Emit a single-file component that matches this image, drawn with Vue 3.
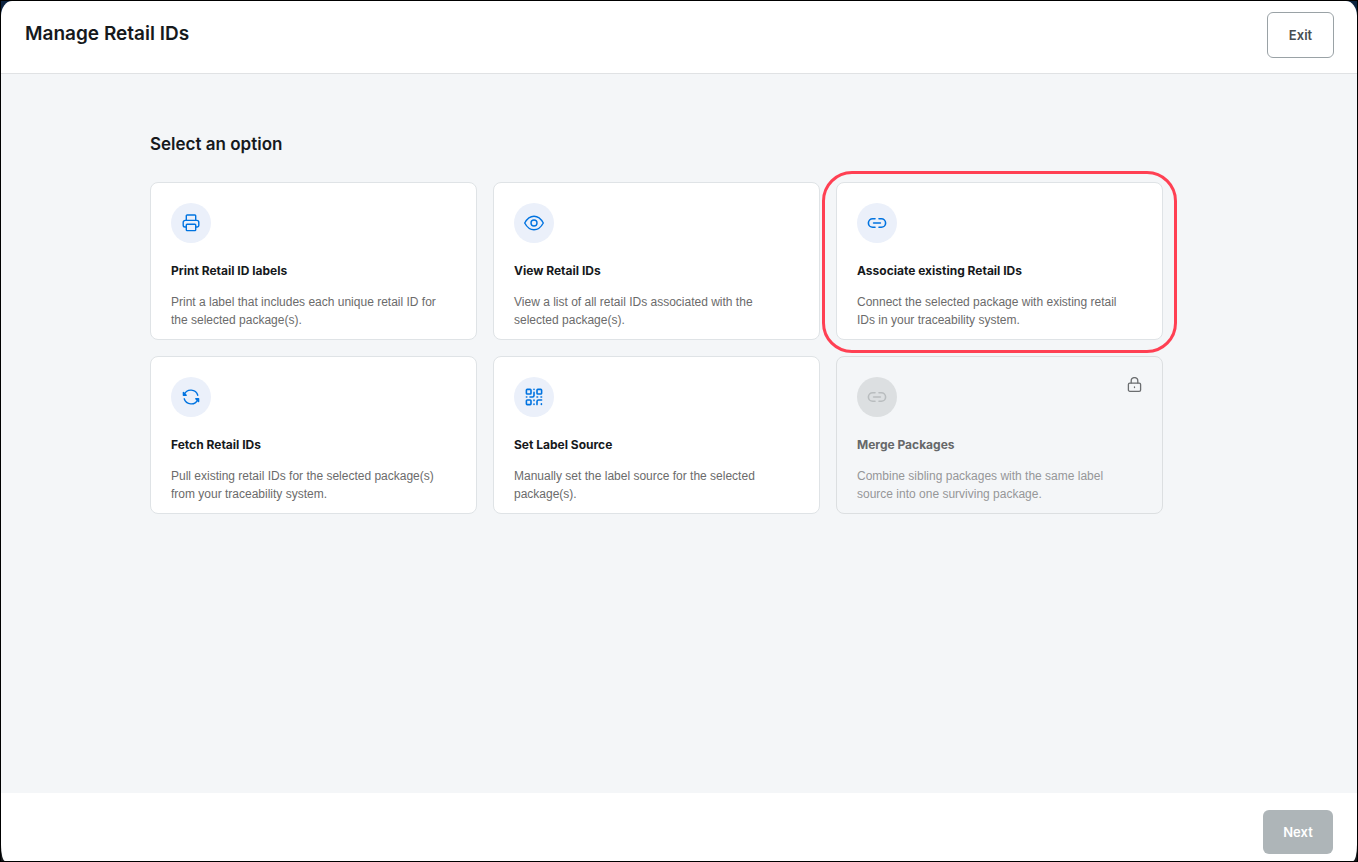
<script setup>
import { ref } from 'vue'

const selected = ref('associate')

const options = [
  {
    key: 'print',
    icon: 'printer',
    title: 'Print Retail ID labels',
    text: 'Print a label that includes each unique retail ID for the selected package(s).'
  },
  {
    key: 'view',
    icon: 'eye',
    title: 'View Retail IDs',
    text: 'View a list of all retail IDs associated with the selected package(s).'
  },
  {
    key: 'associate',
    icon: 'link',
    title: 'Associate existing Retail IDs',
    text: 'Connect the selected package with existing retail IDs in your traceability system.'
  },
  {
    key: 'fetch',
    icon: 'refresh',
    title: 'Fetch Retail IDs',
    text: 'Pull existing retail IDs for the selected package(s) from your traceability system.'
  },
  {
    key: 'source',
    icon: 'qr',
    title: 'Set Label Source',
    text: 'Manually set the label source for the selected package(s).'
  },
  {
    key: 'merge',
    icon: 'link',
    title: 'Merge Packages',
    text: 'Combine sibling packages with the same label source into one surviving package.',
    locked: true
  }
]
</script>

<template>
  <div class="page">
    <div class="modal">
      <header class="modal-header">
        <h1>Manage Retail IDs</h1>
        <button type="button" class="btn btn-exit">Exit</button>
      </header>

      <main class="modal-body">
        <div class="content">
          <h2>Select an option</h2>
          <div class="options">
            <button
              v-for="option in options"
              :key="option.key"
              type="button"
              class="option"
              :class="{ highlighted: option.key === selected }"
              :disabled="option.locked"
              @click="selected = option.key"
            >
              <span class="option-top">
                <span class="option-icon">
                  <svg v-if="option.icon === 'printer'" viewBox="0 0 20 20">
                    <path d="M5.3 7V2.8a.8.8 0 0 1 .8-.8h7.800a.8.8 0 0 1 .8.8V7" />
                    <path d="M5 14H4a1.800 1.800 0 0 1-1.800-1.800V9.400A2 2 0 0 1 4.200 7.400h11.600a2 2 0 0 1 2 2v2.800A1.800 1.800 0 0 1 16 14h-1" />
                    <rect x="5.300" y="11.200" width="9.400" height="6.400" rx=".8" />
                  </svg>
                  <svg v-else-if="option.icon === 'eye'" viewBox="0 0 20 20">
                    <path d="M.7 10C3 5.800 6.200 3.200 10 3.200S17 5.800 19.300 10C17 14.200 13.800 16.800 10 16.800S3 14.200.7 10z" />
                    <circle cx="10" cy="10" r="3" />
                  </svg>
                  <svg v-else-if="option.icon === 'link'" class="link" viewBox="0 0 20 20">
                    <path d="M8 5.700H5.700a4.300 4.300 0 0 0 0 8.600H8M12 5.700h2.300a4.300 4.300 0 0 1 0 8.600H12M6.600 10h6.800" />
                  </svg>
                  <svg v-else-if="option.icon === 'refresh'" viewBox="0 0 20 20">
                    <path d="M3.200 7.400A7.300 7.300 0 0 1 16.800 8.200M16.800 12.600A7.300 7.300 0 0 1 3.200 11.800" />
                    <path class="arrow" d="M2.400 5.400v2.800h2.800zM17.600 14.600v-2.800h-2.800z" />
                  </svg>
                  <svg v-else class="qr" viewBox="0 0 20 20">
                    <rect x="2.400" y="2.400" width="4.600" height="4.600" rx=".8" />
                    <rect x="13" y="2.400" width="4.600" height="4.600" rx=".8" />
                    <rect x="2.400" y="13" width="4.600" height="4.600" rx=".8" />
                    <path d="M10 2.200v.2M10 5.400v3a1.600 1.600 0 0 1-1.600 1.600H6M2.400 10h.4M13 10h.6M17 10h.6M10 13v.6M10 17v.4M13 17.600v-3A1.600 1.600 0 0 1 14.600 13h3M17.400 16.800v.6" />
                  </svg>
                </span>
                <svg v-if="option.locked" class="lock" viewBox="0 0 16 16">
                  <rect x="2.400" y="6.100" width="12.200" height="8.200" rx="1.400" />
                  <path d="M5.200 5.900V3.900a3.300 3.300 0 0 1 6.600 0v2M8.500 10v.6" />
                </svg>
              </span>
              <span class="option-title">{{ option.title }}</span>
              <span class="option-text">{{ option.text }}</span>
            </button>
          </div>
        </div>
      </main>

      <footer class="modal-footer">
        <button type="button" class="btn btn-next" disabled>Next</button>
      </footer>
    </div>
  </div>
</template>

<style>
body {
  margin: 0;
}
</style>

<style scoped>
.page {
  box-sizing: border-box;
  min-height: 100vh;
  display: flex;
  border: 1px solid #000;
  background: linear-gradient(#0c2340 50%, #16191c 50%);
  font-family: Inter, "Liberation Sans", sans-serif;
  color: #16191c;
}

.modal {
  flex: 1;
  display: flex;
  flex-direction: column;
  background: #fff;
  border-radius: 11px 11px 4px 4px / 15px 15px 16px 16px;
}

.modal-header {
  display: flex;
  justify-content: space-between;
  align-items: flex-start;
  padding: 11px 23px 15px 24px;
  border-bottom: 1px solid #e0e2e4;
}

h1 {
  margin: 8px 0 0;
  font-size: 19px;
  line-height: 28px;
  font-weight: 600;
}

.btn {
  box-sizing: border-box;
  padding: 0 19px;
  border: 1px solid transparent;
  border-radius: 6px;
  font-family: inherit;
  font-size: 13px;
  line-height: 20px;
  font-weight: 600;
}

.btn-exit {
  min-width: 67px;
  height: 46px;
  background: #fff;
  border-color: #9aa2a6;
  color: #474e52;
}

.btn-next {
  min-width: 70px;
  height: 44px;
  background: #aeb5b8;
  color: #fff;
}

.modal-body {
  flex: 1;
  background: #f4f6f8;
}

.content {
  max-width: 1058px;
  margin: 0 auto;
  padding: 56px 0;
}

h2 {
  margin: 0 0 24px;
  font-size: 17px;
  line-height: 28px;
  font-weight: 600;
}

.options {
  display: grid;
  grid-template-columns: repeat(3, minmax(0, 1fr));
  gap: 16px;
  max-width: 1013px;
}

.option {
  position: relative;
  display: flex;
  flex-direction: column;
  padding: 20px 20px 10px;
  border: 1px solid #dfe3e6;
  border-radius: 8px;
  background: #fff;
  color: inherit;
  font-family: inherit;
  text-align: left;
  cursor: pointer;
}

.option.highlighted::after {
  content: "";
  position: absolute;
  inset: -12px -15px -14px;
  border: 3px solid #ff4053;
  border-radius: 30px;
}

.option-top {
  display: flex;
  justify-content: space-between;
  align-items: flex-start;
  margin-bottom: 18px;
}

.option-icon {
  display: flex;
  align-items: center;
  justify-content: center;
  width: 40px;
  height: 40px;
  border-radius: 50%;
  background: #ebf0fa;
  color: #0073e0;
}

svg {
  width: 20px;
  height: 20px;
  fill: none;
  stroke: currentColor;
  stroke-width: 1.4;
  stroke-linecap: round;
  stroke-linejoin: round;
}

.link,
.qr {
  stroke-width: 1.6;
}

.arrow {
  fill: currentColor;
}

.lock {
  width: 16px;
  height: 16px;
  stroke-width: 1.3;
  color: #6b6e70;
}

.option-title {
  margin-bottom: 12px;
  font-size: 12px;
  line-height: 20px;
  font-weight: 700;
}

.option-text {
  padding-right: 12px;
  font-family: "Liberation Sans", Arial, sans-serif;
  font-size: 12px;
  line-height: 18px;
  color: #6b6b6b;
}

.option:disabled {
  background: transparent;
  border-color: #dcdfe1;
  cursor: default;
}

.option:disabled .option-icon {
  background: #dcdfe1;
  color: #b9bdbf;
}

.option:disabled .option-title {
  color: #666869;
}

.option:disabled .option-text {
  color: #969798;
}

.modal-footer {
  display: flex;
  justify-content: flex-end;
  padding: 17px 24px 7px;
}
</style>
